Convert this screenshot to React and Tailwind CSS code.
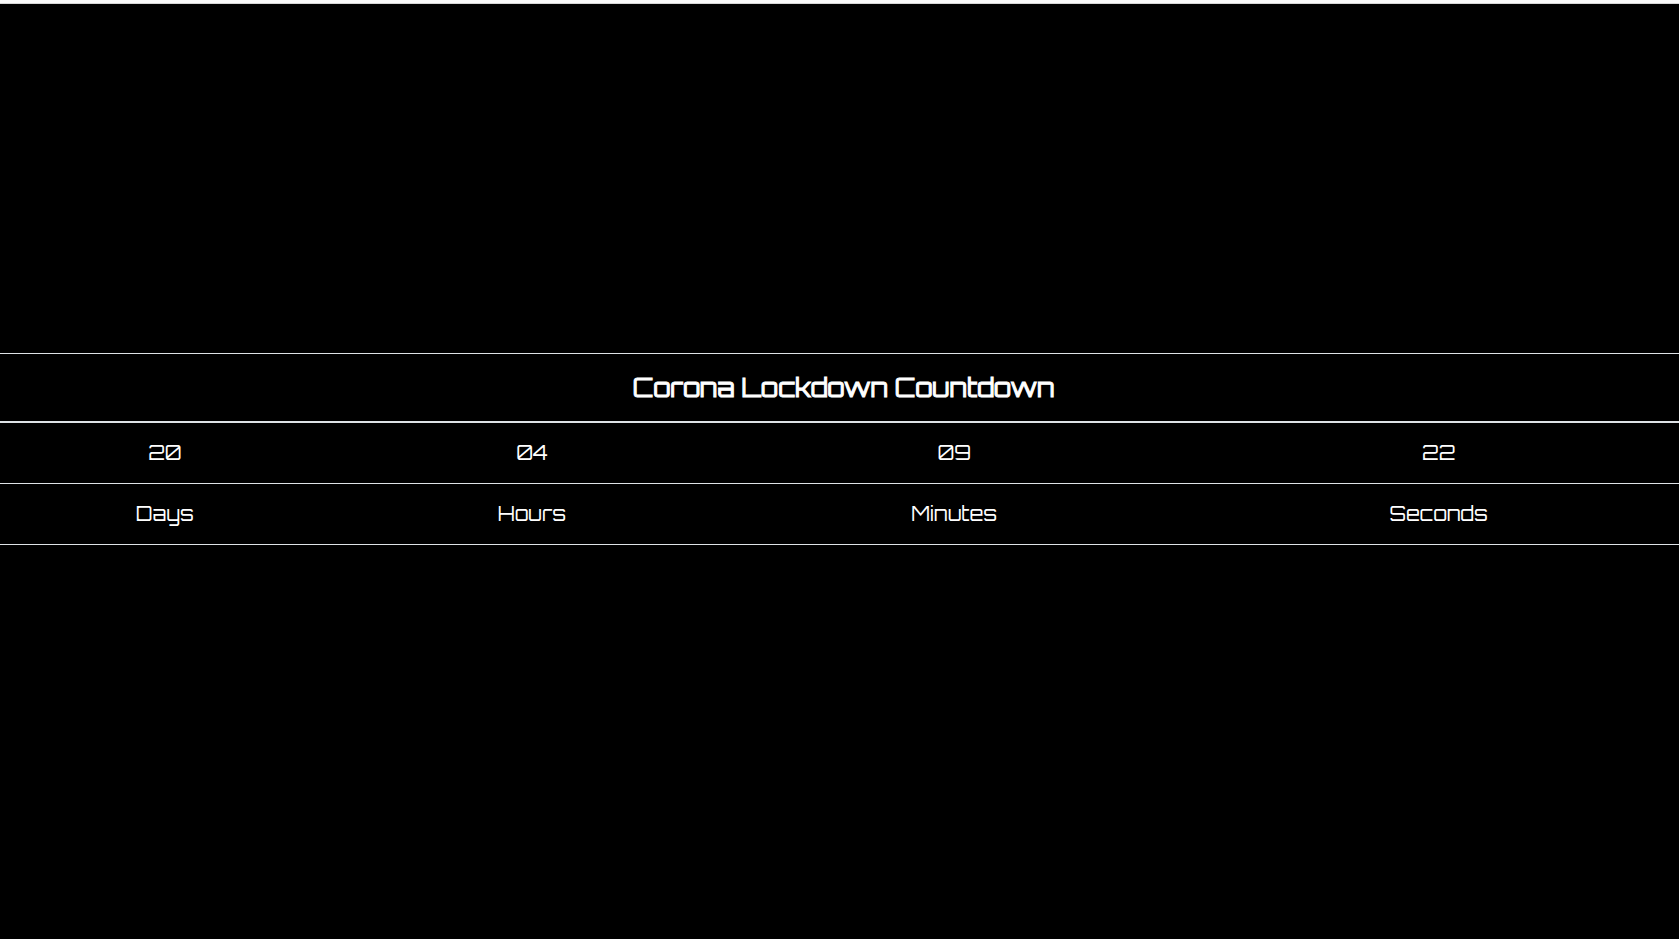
const units = [
  { label: "Days", value: "20" },
  { label: "Hours", value: "04" },
  { label: "Minutes", value: "09" },
  { label: "Seconds", value: "22" },
];

export default function App() {
  return (
    <div className="flex min-h-screen flex-col overflow-hidden bg-black text-white">
      <header className="h-1 border-b border-[#d6d6d6] bg-[#fafafa]" />
      <main className="grow pt-[349px] font-['Orbitron','DejaVu_Sans',sans-serif]">
        <table className="-ml-2 w-[calc(100%+24px)] table-fixed border-separate border-spacing-0 text-center">
          <colgroup>
            <col className="w-[20.3%]" />
            <col className="w-[22.8%]" />
            <col className="w-[26.8%]" />
            <col className="w-[30.1%]" />
          </colgroup>
          <thead>
            <tr>
              <th
                colSpan={4}
                className="h-[70px] border-t border-b-2 border-[#dee2e6] text-[25px] leading-8 font-normal [-webkit-text-stroke:1px_white]"
              >
                Corona Lockdown Countdown
              </th>
            </tr>
          </thead>
          <tbody>
            <tr>
              {units.map((unit) => (
                <td key={unit.label} className="h-[61px] border-b border-[#dee2e6] text-xl leading-8">
                  {unit.value}
                </td>
              ))}
            </tr>
            <tr>
              {units.map((unit) => (
                <td key={unit.label} className="h-[61px] border-b border-[#dee2e6] text-xl leading-8">
                  {unit.label}
                </td>
              ))}
            </tr>
          </tbody>
        </table>
      </main>
    </div>
  );
}
